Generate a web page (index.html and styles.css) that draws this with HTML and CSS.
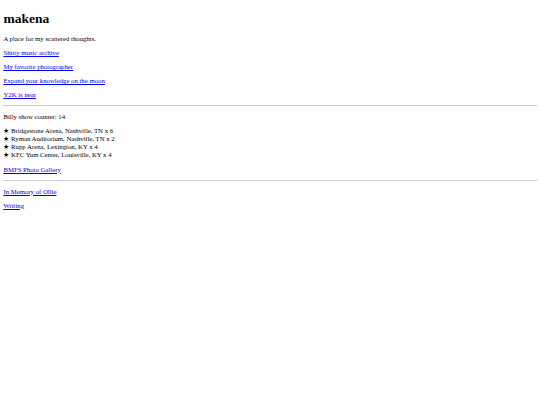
FILE: index.html
```html
<!DOCTYPE html>
<html lang="en">
<head>
    <meta charset="UTF-8">
    <meta name="viewport" content="width=device-width, initial-scale=1.0">
    <title>makena</title>
    <link rel="stylesheet" href="styles.css">
</head>
<body>
    <h1>makena</h1>
    <p>A place for my scattered thoughts.</p>
    <p><a href="#">Shitty music archive</a></p>
    <p><a href="#">My favorite photographer</a></p>
    <p><a href="#">Expand your knowledge on the moon</a></p>
    <p><a href="#">Y2K is near</a></p>
    <hr>
    <p>Billy show counter: 14</p>
    <p class="shows">
        ★ Bridgestone Arena, Nashville, TN x 6<br>
        ★ Ryman Auditorium, Nashville, TN x 2<br>
        ★ Rupp Arena, Lexington, KY x 4<br>
        ★ KFC Yum Center, Louisville, KY x 4
    </p>
    <p><a href="#">BMFS Photo Gallery</a></p>
    <hr>
    <p><a href="#">In Memory of Ollie</a></p>
    <p><a href="#">Writing</a></p>
</body>
</html>
```

FILE: styles.css
```css
body {
    margin: 3.4px;
    font-family: "Liberation Serif", "Times New Roman", serif;
    font-size: 6.75px;
    color: #000;
    background-color: #fff;
}

h1 {
    font-size: 2em;
    margin: 0.56em 0 0.62em;
}

p {
    margin: 1.03em 0;
}

a {
    color: #0000ee;
}

hr {
    height: 0;
    border: 0;
    border-top: 1px solid #cfcfcf;
    margin: 0.5em 0;
}
```
